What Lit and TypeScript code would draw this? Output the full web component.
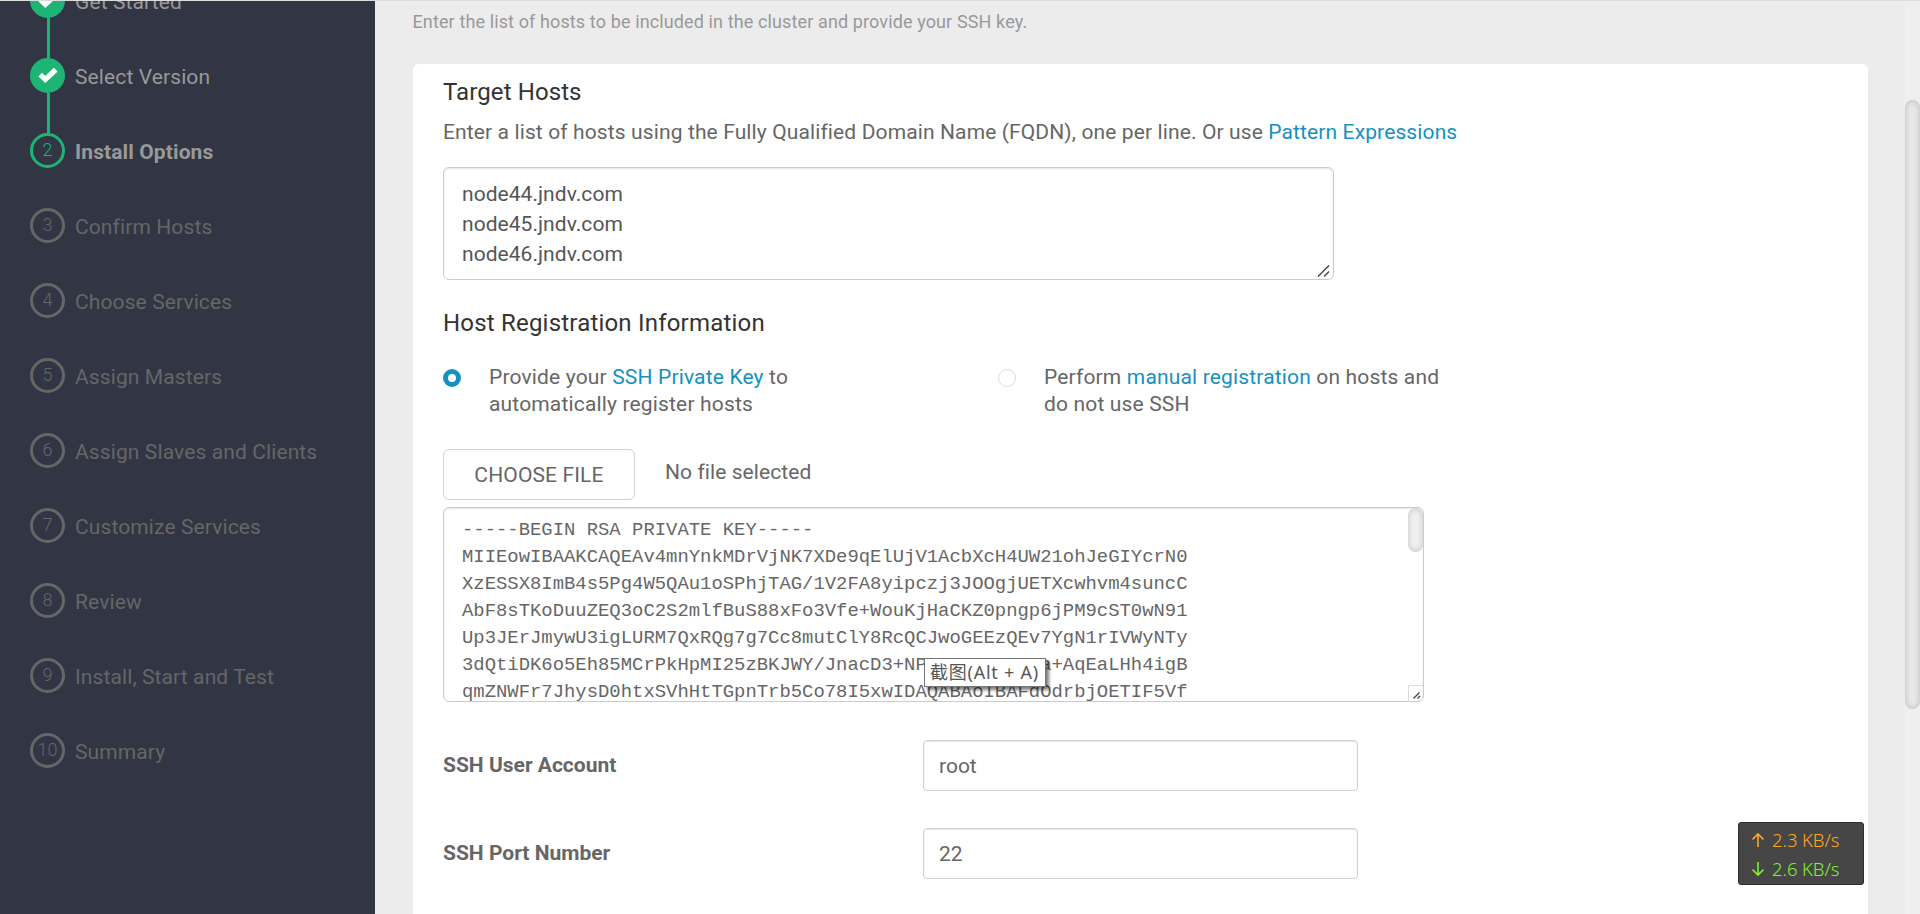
import { LitElement, html, css } from "lit";
import { customElement } from "lit/decorators.js";
import { classMap } from "lit/directives/class-map.js";

const STEPS = [
  "Get Started",
  "Select Version",
  "Install Options",
  "Confirm Hosts",
  "Choose Services",
  "Assign Masters",
  "Assign Slaves and Clients",
  "Customize Services",
  "Review",
  "Install, Start and Test",
  "Summary",
];
const CURRENT = 2;

const HOSTS = ["node44.jndv.com", "node45.jndv.com", "node46.jndv.com"];

const KEY_LINES = [
  "-----BEGIN RSA PRIVATE KEY-----",
  "MIIEowIBAAKCAQEAv4mnYnkMDrVjNK7XDe9qElUjV1AcbXcH4UW21ohJeGIYcrN0",
  "XzESSX8ImB4s5Pg4W5QAu1oSPhjTAG/1V2FA8yipczj3JOOgjUETXcwhvm4suncC",
  "AbF8sTKoDuuZEQ3oC2S2mlfBuS88xFo3Vfe+WouKjHaCKZ0pngp6jPM9cST0wN91",
  "Up3JErJmywU3igLURM7QxRQg7g7Cc8mutClY8RcQCJwoGEEzQEv7YgN1rIVWyNTy",
  "3dQtiDK6o5Eh85MCrPkHpMI25zBKJWY/JnacD3+NP" + " ".repeat(10) + "a+AqEaLHh4igB",
  "qmZNWFr7JhysD0htxSVhHtTGpnTrb5Co78I5xwIDAQABAoIBAFdOdrbjOETIF5Vf",
];

@customElement("wizard-steps")
export class WizardSteps extends LitElement {
  static styles = css`
    :host {
      display: block;
      box-sizing: border-box;
      width: 375px;
      height: 913px;
      padding-left: 30px;
      background: #323544;
      overflow: hidden;
      font: 21px/30px Roboto, sans-serif;
      letter-spacing: 0.11px;
    }
    .list {
      margin-top: -18px;
    }
    .step {
      display: flex;
      align-items: flex-start;
      height: 35px;
      color: #666;
    }
    .circle {
      box-sizing: border-box;
      flex: none;
      width: 35px;
      height: 35px;
      border: 3px solid #666;
      border-radius: 50%;
      font-weight: 300;
      font-size: 18px;
      line-height: 27px;
      letter-spacing: 0;
      text-align: center;
    }
    .label {
      margin: 4px 0 0 10px;
      white-space: nowrap;
    }
    .done,
    .current {
      color: #999;
    }
    .done .circle {
      background: #1eb475;
      border-color: #1eb475;
    }
    .current .circle {
      border-color: #1eb475;
      color: #1eb475;
    }
    .current .label {
      font-weight: 700;
    }
    .tick {
      display: block;
      width: 29px;
      height: 29px;
    }
    .link {
      width: 3px;
      height: 40px;
      margin-left: 17px;
    }
    .link.on {
      background: #1eb475;
    }
  `;
  render() {
    return html`<div class="list">
      ${STEPS.map(
        (label, i) => html`
          ${i ? html`<div class=${classMap({ link: true, on: i <= CURRENT })}></div>` : ""}
          <div class=${classMap({ step: true, done: i < CURRENT, current: i === CURRENT })}>
            <div class="circle">
              ${i < CURRENT
                ? html`<svg class="tick" viewBox="0 0 29 29">
                    <path d="M5.5 15.5 L9 11.8 L12.3 14.9 L20.8 6.8 L24.7 10.6 L12.3 22 Z" fill="#fff" />
                  </svg>`
                : i}
            </div>
            <div class="label">${label}</div>
          </div>
        `
      )}
    </div>`;
  }
}

@customElement("app-root")
export class AppRoot extends LitElement {
  static styles = css`
    :host {
      display: block;
      position: relative;
      box-sizing: border-box;
      width: 1920px;
      height: 914px;
      overflow: hidden;
      border-top: 1px solid #dcdcdc;
      background: #ececec;
      color: #666;
      font: 21px/30px Roboto, "Noto Sans CJK SC", sans-serif;
      letter-spacing: 0.12px;
    }
    * {
      box-sizing: border-box;
    }
    .page {
      display: flex;
      height: 913px;
    }
    .content {
      flex: 1;
      padding: 8px 37px 0 37.5px;
    }
    .intro {
      font-size: 18px;
      line-height: 26px;
      color: #999;
    }
    .card {
      height: 900px;
      margin-top: 29px;
      padding: 15px 30px 0 30.5px;
      border-radius: 6px;
      background: #fff;
    }
    .title {
      font-size: 24px;
      line-height: 26px;
      letter-spacing: 0.2px;
      color: #333;
    }
    .title.first {
      letter-spacing: 0.1px;
    }
    .link {
      color: #1491c1;
    }
    .lead {
      margin-top: 12px;
    }
    .area {
      border: 1px solid #ccc;
      border-radius: 6px;
      background: #fff;
      box-shadow: inset 0 1px 2px rgba(0, 0, 0, 0.1);
      overflow: hidden;
      white-space: pre;
      color: #555;
    }
    .hosts {
      display: flex;
      justify-content: space-between;
      align-items: flex-end;
      width: 891px;
      height: 113px;
      margin: 20px 0 30px;
      padding: 0 0 0 18px;
      letter-spacing: 0.05px;
    }
    .hostlines {
      align-self: flex-start;
      padding-top: 11px;
    }
    .grip {
      display: block;
      width: 18px;
      height: 18px;
    }
    .radios {
      display: flex;
      margin-top: 28px;
      line-height: 27px;
      letter-spacing: 0.16px;
    }
    .option {
      display: flex;
      width: 555px;
    }
    .radio {
      flex: none;
      width: 18px;
      height: 18px;
      margin: 5px 28px 0 0;
      border: 1px solid #ddd;
      border-radius: 50%;
      background: #fff;
    }
    .radio.on {
      border: 5px solid #1491c1;
    }
    .file {
      display: flex;
      margin-top: 31px;
      gap: 30px;
      letter-spacing: 0.08px;
    }
    .choose {
      width: 192px;
      height: 51px;
      border: 1px solid #cfd3d7;
      border-radius: 6px;
      text-align: center;
      line-height: 51px;
      letter-spacing: 0.14px;
    }
    .nofile {
      line-height: 47px;
    }
    .key {
      display: flex;
      justify-content: space-between;
      width: 981px;
      height: 195px;
      margin-top: 7px;
      padding-left: 18px;
      font: 18.9px/27px "Liberation Mono", monospace;
      letter-spacing: 0;
      color: #666;
    }
    .keylines {
      padding-top: 9px;
    }
    .rail {
      display: flex;
      flex-direction: column;
      justify-content: space-between;
      width: 15px;
      height: 193px;
    }
    .thumb {
      width: 15px;
      height: 44px;
      border-radius: 8px;
      background: #f0f0f0;
      box-shadow: inset 0 0 6px rgba(0, 0, 0, 0.2);
    }
    .corner {
      display: block;
      width: 15px;
      height: 16px;
    }
    .row {
      display: flex;
      height: 51px;
      margin-top: 37px;
    }
    .row.first {
      margin-top: 38px;
    }
    .name {
      width: 480px;
      font-weight: 700;
      letter-spacing: 0;
      line-height: 51px;
    }
    .input {
      width: 435px;
      height: 51px;
      padding: 0 0 0 15px;
      border: 1px solid #cfd3d7;
      border-radius: 4px;
      box-shadow: inset 0 1px 2px rgba(0, 0, 0, 0.1);
      color: #666;
      background: #fff;
      font: inherit;
      line-height: 49px;
      letter-spacing: 0;
    }
    .scroll {
      width: 15px;
      padding-top: 99px;
      background: #efefef;
    }
    .scrollthumb {
      height: 609px;
      border-radius: 8px;
      background: #e8e8e8;
      box-shadow: inset 0 0 6px rgba(0, 0, 0, 0.2);
    }
    .tip {
      position: absolute;
      left: 924px;
      top: 657px;
      width: 122px;
      height: 29px;
      border: 1px solid #767676;
      background: #fff;
      box-shadow: 3px 3px 3px rgba(0, 0, 0, 0.5);
      color: #575757;
      font: 18px/26px "Noto Sans", "Noto Sans CJK SC", sans-serif;
      letter-spacing: 0.75px;
      padding-left: 5px;
      white-space: nowrap;
    }
    .net {
      position: absolute;
      left: 1738px;
      top: 821px;
      width: 126px;
      height: 63px;
      border: 1px solid #2e2e2e;
      border-radius: 3px;
      background: #464646;
      padding: 2px 0 0 12px;
      font: 300 18.5px/28px "Noto Sans", sans-serif;
      letter-spacing: -0.1px;
    }
    .rate {
      display: flex;
      align-items: center;
      gap: 7px;
      height: 29px;
    }
    .up {
      color: #ffa726;
    }
    .down {
      color: #7cf52b;
    }
    .arrow {
      display: block;
      width: 14px;
      height: 16px;
    }
  `;

  private arrow(up: boolean) {
    const d = up ? "M7 15V2M1.5 7.5L7 2L12.5 7.5" : "M7 1V14M1.5 8.5L7 14L12.5 8.5";
    return html`<svg class="arrow" viewBox="0 0 14 16">
      <path d=${d} fill="none" stroke="currentColor" stroke-width="1.6" />
    </svg>`;
  }

  render() {
    return html`
      <div class="page">
        <wizard-steps></wizard-steps>
        <div class="content">
          <div class="intro">Enter the list of hosts to be included in the cluster and provide your SSH key.</div>
          <div class="card">
            <div class="title first">Target Hosts</div>
            <div class="lead">Enter a list of hosts using the Fully Qualified Domain Name (FQDN), one per line. Or use <span class="link">Pattern Expressions</span></div>
            <div class="area hosts">
              <div class="hostlines">${HOSTS.map((h) => html`<div>${h}</div>`)}</div>
              <svg class="grip" viewBox="0 0 18 18">
                <path d="M3 15.5L14 4.5M9 15.5L14 10.5" stroke="#444" stroke-width="1.4" />
              </svg>
            </div>
            <div class="title">Host Registration Information</div>
            <div class="radios">
              <div class="option">
                <div class="radio on"></div>
                <div>Provide your <span class="link">SSH Private Key</span> to<br />automatically register hosts</div>
              </div>
              <div class="option">
                <div class="radio"></div>
                <div>Perform <span class="link">manual registration</span> on hosts and<br />do not use SSH</div>
              </div>
            </div>
            <div class="file">
              <div class="choose">CHOOSE FILE</div>
              <div class="nofile">No file selected</div>
            </div>
            <div class="area key">
              <div class="keylines">${KEY_LINES.map((l) => html`<div>${l}</div>`)}</div>
              <div class="rail">
                <div class="thumb"></div>
                <svg class="corner" viewBox="0 0 15 16">
                  <path d="M.5 16V.5H15" fill="none" stroke="#dcdcdc" />
                  <path d="M5.5 13.5L11.5 7.5M9.5 13.5L12 11" stroke="#444" stroke-width="1.4" />
                </svg>
              </div>
            </div>
            <div class="row first">
              <div class="name">SSH User Account</div>
              <input class="input" .value=${"root"} />
            </div>
            <div class="row">
              <div class="name">SSH Port Number</div>
              <input class="input" .value=${"22"} />
            </div>
          </div>
        </div>
        <div class="scroll"><div class="scrollthumb"></div></div>
      </div>
      <div class="tip">截图(Alt + A)</div>
      <div class="net">
        <div class="rate up">${this.arrow(true)}<span>2.3 KB/s</span></div>
        <div class="rate down">${this.arrow(false)}<span>2.6 KB/s</span></div>
      </div>
    `;
  }
}
